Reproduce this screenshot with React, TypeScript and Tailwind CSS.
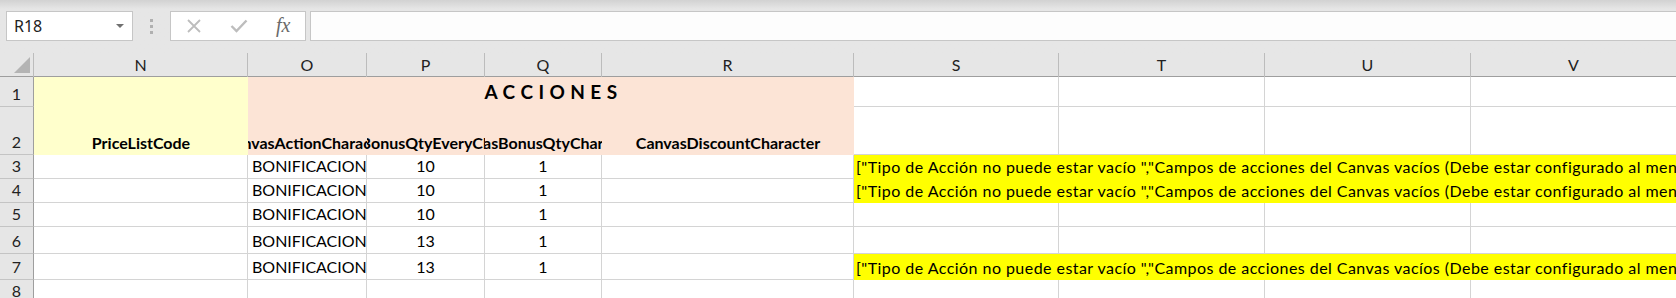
import React from 'react';

const cols = ['N', 'O', 'P', 'Q', 'R', 'S', 'T', 'U', 'V'];

const YELLOW_TEXT =
  '["Tipo de Acción no puede estar vacío ","Campos de acciones del Canvas vacíos (Debe estar configurado al menos un campo)"]';

type DataRow = { n: number; h: string; p: string; err: boolean };

const rows: DataRow[] = [
  { n: 3, h: 'h-[24px]', p: '10', err: true },
  { n: 4, h: 'h-[24px]', p: '10', err: true },
  { n: 5, h: 'h-[24px]', p: '10', err: false },
  { n: 6, h: 'h-[27px]', p: '13', err: false },
  { n: 7, h: 'h-[26px]', p: '13', err: true },
];

const grid =
  'grid grid-cols-[34px_214px_119px_118px_117px_252px_205px_206px_206px_206px]';
const cell = 'border-r border-b border-[#d4d4d4] flex items-end pb-[3px] leading-[18px] overflow-hidden whitespace-nowrap';
const rowHead =
  'bg-[#e6e6e6] border-r border-r-[#9e9e9e] border-b border-b-[#c4c4c4] flex items-end justify-center pb-[3px] leading-[18px] text-[#222]';
const headCell =
  'bg-[#fce4d6] flex items-end justify-center pb-[3px] leading-[18px] font-bold overflow-hidden whitespace-nowrap';

const FormulaBar: React.FC = () => (
  <div className="bg-gradient-to-b from-[#d2d2d2] to-[#e6e6e6] to-[9px] h-[53px] pt-[11px] flex items-start">
    <div className="ml-[6px] w-[127px] h-[30px] bg-white border border-[#c6c6c6] flex items-center pl-[7px] pr-[8px] justify-between">
      <span className="text-[16px] text-[#222] font-['Noto_Sans',sans-serif]">R18</span>
      <svg width="8" height="4" viewBox="0 0 8 4">
        <path d="M0 0 L8 0 L4 4 Z" fill="#707070" />
      </svg>
    </div>
    <div className="w-[37px] h-[30px] flex flex-col items-center justify-center gap-[3px]">
      <span className="w-[3px] h-[3px] bg-[#b0b0b0]" />
      <span className="w-[3px] h-[3px] bg-[#b0b0b0]" />
      <span className="w-[3px] h-[3px] bg-[#b0b0b0]" />
    </div>
    <div className="w-[136px] h-[30px] bg-white border border-[#c6c6c6] flex items-center pl-[15px] gap-[28px]">
      <svg width="16" height="14" viewBox="0 0 16 14">
        <path d="M2 1 L14 13 M14 1 L2 13" stroke="#bdbdbd" strokeWidth="1.8" fill="none" />
      </svg>
      <svg width="18" height="14" viewBox="0 0 18 14">
        <path d="M1.5 7 L6.5 12 L16.5 1.5" stroke="#bdbdbd" strokeWidth="2.4" fill="none" />
      </svg>
      <span className="font-['Liberation_Serif',serif] italic text-[20px] text-[#6a6a6a] leading-none -mt-[2px]">
        fx
      </span>
    </div>
    <div className="ml-[4px] flex-1 h-[30px] bg-[#fdfdfd] border border-r-0 border-[#c6c6c6]" />
  </div>
);

export default function App() {
  return (
    <div className="w-[1676px] h-[298px] overflow-hidden bg-white font-['Lato',sans-serif] text-[16px] text-black">
      <FormulaBar />

      {/* column headers */}
      <div className={`${grid} h-[24px] bg-[#e6e6e6] border-b border-[#9e9e9e]`}>
        <div className="border-r border-[#bcbcbc] relative">
          <svg className="absolute left-[14px] top-[4px]" width="17" height="17" viewBox="0 0 17 17">
            <path d="M0 16 L16 16 L16 0 Z" fill="#b4b4b4" />
          </svg>
        </div>
        {cols.map((c) => (
          <div key={c} className="border-r border-[#bcbcbc] flex items-center justify-center text-[#222]">
            {c}
          </div>
        ))}
      </div>

      {/* row 1 */}
      <div className={`${grid} h-[30px]`}>
        <div className={rowHead}>1</div>
        <div className="bg-[#ffffcc]" />
        <div className="col-span-4 bg-[#fce4d6] flex items-end justify-center pb-[3px] leading-[24px] font-bold text-[19px] tracking-[0.4px]">
          A C C I O N E S
        </div>
        <div className={cell} />
        <div className={cell} />
        <div className={cell} />
        <div className={cell} />
      </div>

      {/* row 2 */}
      <div className={`${grid} h-[48px]`}>
        <div className={rowHead}>2</div>
        <div className="bg-[#ffffcc] flex items-end justify-center pb-[3px] leading-[18px] font-bold">
          PriceListCode
        </div>
        <div className={headCell}>CanvasActionCharacter</div>
        <div className={headCell}>CanvasBonusQtyEveryCharacter</div>
        <div className={headCell}>CanvasBonusQtyCharacter</div>
        <div className={headCell}>CanvasDiscountCharacter</div>
        <div className={cell} />
        <div className={cell} />
        <div className={cell} />
        <div className={cell} />
      </div>

      {/* data rows */}
      {rows.map((r) => (
        <div key={r.n} className={`${grid} ${r.h}`}>
          <div className={rowHead}>{r.n}</div>
          <div className={cell} />
          <div className={`${cell} pl-[4px]`}>BONIFICACION</div>
          <div className={`${cell} justify-center`}>{r.p}</div>
          <div className={`${cell} justify-center`}>1</div>
          <div className={cell} />
          {r.err ? (
            <div className="col-span-4 bg-[#ffff00] flex items-end pb-[3px] pl-[2px] leading-[18px] tracking-[0.45px] overflow-hidden whitespace-nowrap">
              {YELLOW_TEXT}
            </div>
          ) : (
            <>
              <div className={cell} />
              <div className={cell} />
              <div className={cell} />
              <div className={cell} />
            </>
          )}
        </div>
      ))}

      {/* row 8 */}
      <div className={`${grid} h-[24px]`}>
        <div className={rowHead}>8</div>
        {cols.map((c) => (
          <div key={c} className={cell} />
        ))}
      </div>
    </div>
  );
}
